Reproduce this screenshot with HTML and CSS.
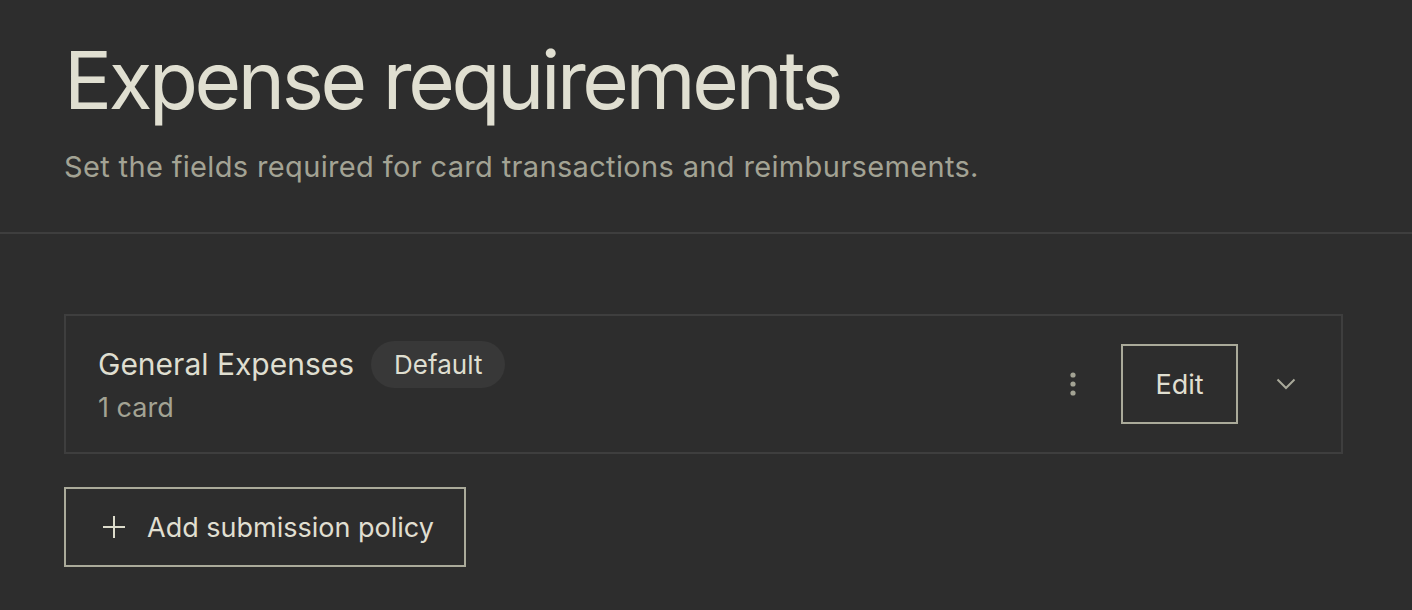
FILE: index.html
```html
<!DOCTYPE html>
<html lang="en">
<head>
    <meta charset="UTF-8">
    <meta name="viewport" content="width=device-width, initial-scale=1.0">
    <title>Expense requirements</title>
    <link rel="stylesheet" href="styles.css">
</head>
<body>
    <header class="page-header">
        <h1>Expense requirements</h1>
        <p class="subtitle">Set the fields required for card transactions and reimbursements.</p>
    </header>

    <main class="content">
        <div class="policy-card">
            <div class="policy-info">
                <div class="policy-title">
                    <span class="policy-name">General Expenses</span>
                    <span class="badge">Default</span>
                </div>
                <div class="policy-meta">1 card</div>
            </div>
            <div class="policy-actions">
                <button class="icon-btn" aria-label="More">
                    <svg width="8" height="26" viewBox="0 0 8 26">
                        <circle cx="4" cy="4" r="2.6" fill="#a3a394"/>
                        <circle cx="4" cy="13" r="2.6" fill="#a3a394"/>
                        <circle cx="4" cy="22" r="2.6" fill="#a3a394"/>
                    </svg>
                </button>
                <button class="outline-btn edit-btn">Edit</button>
                <button class="icon-btn chevron" aria-label="Expand">
                    <svg width="20" height="12" viewBox="0 0 20 12">
                        <path d="M1.5 1.5 L10 10 L18.5 1.5" fill="none" stroke="#a9a99a" stroke-width="2"/>
                    </svg>
                </button>
            </div>
        </div>

        <button class="outline-btn add-btn">
            <svg width="22" height="22" viewBox="0 0 22 22">
                <path d="M11 0 V22 M0 11 H22" stroke="#dcdbcb" stroke-width="2"/>
            </svg>
            Add submission policy
        </button>
    </main>
</body>
</html>
```

FILE: styles.css
```css
body {
    margin: 0;
    background-color: #2d2d2d;
    color: #dfded0;
    font-family: Inter, "Noto Sans", sans-serif;
}
.page-header {
    padding: 32px 64px 48px;
    border-bottom: 2px solid #3e3e3e;
}
h1 {
    margin: 0;
    font-size: 80px;
    font-weight: 400;
    line-height: 96px;
    letter-spacing: -3.4px;
    color: #e0dfd1;
}
.subtitle {
    margin: 22px 0 0;
    font-size: 29px;
    line-height: 34px;
    letter-spacing: 0.35px;
    color: #a3a394;
}
.content {
    padding: 80px 69px 0 64px;
}
.policy-card {
    display: flex;
    align-items: center;
    justify-content: space-between;
    border: 2px solid #3e3e3e;
    padding: 24px 45px 28px 32px;
}
.policy-title {
    display: flex;
    align-items: center;
    gap: 17px;
}
.policy-name {
    font-size: 30px;
}
.badge {
    background-color: #383838;
    border-radius: 24px;
    padding: 0 23px;
    height: 47px;
    line-height: 47px;
    font-size: 26px;
}
.policy-meta {
    margin-top: 4px;
    font-size: 27px;
    line-height: 32px;
    color: #a3a394;
}
.policy-actions {
    display: flex;
    align-items: center;
    padding-top: 4px;
}
button {
    font-family: inherit;
    background: none;
    border: none;
    color: #e0dfd1;
    cursor: pointer;
    padding: 0;
}
.icon-btn {
    display: flex;
    align-items: center;
    justify-content: center;
}
.outline-btn {
    box-sizing: border-box;
    border: 2px solid #aaaa9a;
    font-size: 27px;
    height: 80px;
}
.edit-btn {
    width: 117px;
    margin-left: 44px;
}
.chevron {
    margin-left: 38px;
}
.add-btn {
    display: flex;
    align-items: center;
    gap: 22px;
    margin-top: 33px;
    padding: 0 30px 0 37px;
}
```
